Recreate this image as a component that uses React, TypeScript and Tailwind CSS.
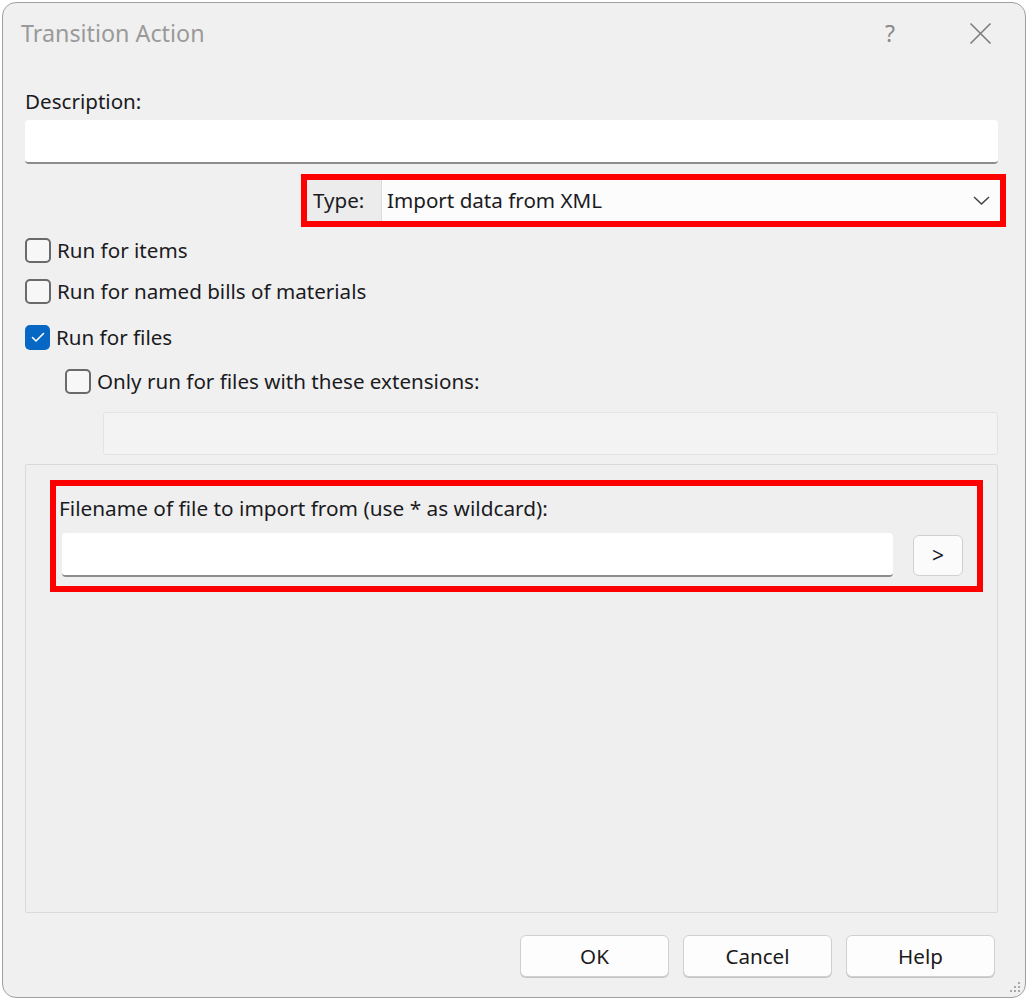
import React from "react";

const font = { fontFamily: '"Noto Sans", "Open Sans", sans-serif' };

function Check({ checked, label, indent }: { checked?: boolean; label: string; indent?: boolean }) {
  return (
    <div className={`flex h-[26px] items-center ${indent ? "pl-[40px]" : ""}`}>
      {checked ? (
        <span className="flex h-[25px] w-[25px] items-center justify-center rounded-[5px] bg-[#0767c4]">
          <svg width="14" height="11" viewBox="0 0 14 11" fill="none">
            <path d="M1.5 5.5 L5 9 L12.5 1.5" stroke="white" strokeWidth="1.6" strokeLinecap="round" strokeLinejoin="round" />
          </svg>
        </span>
      ) : (
        <span className="h-[25px] w-[26px] rounded-[5px] border-2 border-[#6a6a6a] bg-[#f7f7f7]" />
      )}
      <span className="ml-[6px] text-[20.6px] leading-[26px] text-[#1b1b1f]">{label}</span>
    </div>
  );
}

function Btn({ children }: { children: React.ReactNode }) {
  return (
    <button className="h-[42px] w-[149px] rounded-[6px] border border-[#d0d0d0] bg-[#fdfdfd] text-[20.6px] text-[#1b1b1b] shadow-[0_1px_0_#c4c4c4]">
      {children}
    </button>
  );
}

export default function App() {
  return (
    <div className="h-[1000px] w-[1029px] bg-white pl-[2px] pt-[2px]" style={font}>
      <div className="relative flex h-[996px] w-[1024px] flex-col rounded-[14px] border border-[#a0a0a0] bg-[#f0f0f0]">
        {/* title bar */}
        <div className="flex h-[61px] items-center pl-[18px] pr-[33px]">
          <span className="text-[23.3px] text-[#9a9a9a]">Transition Action</span>
          <span className="ml-auto text-[23px] text-[#8a8a8a]">?</span>
          <svg className="ml-[74px]" width="23" height="23" viewBox="0 0 23 23" fill="none">
            <path d="M1.5 1.5 L21.5 21.5 M21.5 1.5 L1.5 21.5" stroke="#7c7c7c" strokeWidth="1.6" />
          </svg>
        </div>

        <div className="flex flex-1 flex-col pl-[22px] pr-[27px]">
          <div className="mt-[24px] h-[26px] text-[20.6px] leading-[26px] text-[#1b1b1f]">Description:</div>
          <div className="mt-[6px] h-[44px] rounded-[4px] border-b-2 border-[#8c8c8c] bg-white" />

          {/* type */}
          <div className="mt-[10px] flex justify-end">
            <div className="-mr-[8px] flex h-[53px] w-[705px] border-[6px] border-[#ff0000]">
              <div className="flex w-[74px] items-center bg-[#ececec] pl-[6px] text-[20.6px] text-[#1b1b1f]">Type:</div>
              <div className="flex flex-1 items-center border-l border-[#dcdcdc] bg-[#fcfcfc] pl-[5px] pr-[10px] text-[20.6px] text-[#1b1b1f]">
                Import data from XML
                <svg className="ml-auto" width="17" height="9" viewBox="0 0 17 9" fill="none">
                  <path d="M1 1 L8.5 8 L16 1" stroke="#444" strokeWidth="1.5" />
                </svg>
              </div>
            </div>
          </div>

          <div className="mt-[10px]">
            <Check label="Run for items" />
          </div>
          <div className="mt-[15px]">
            <Check label="Run for named bills of materials" />
          </div>
          <div className="mt-[20px]">
            <Check checked label="Run for files" />
          </div>
          <div className="mt-[18px]">
            <Check indent label="Only run for files with these extensions:" />
          </div>
          <div className="ml-[78px] mt-[18px] h-[43px] rounded-[3px] border border-[#e3e3e3] bg-[#f3f3f3]" />

          {/* group panel */}
          <div className="mt-[9px] flex-1 rounded-[2px] border border-[#dadada] bg-[#efefef] pl-[24px] pt-[15px]">
            <div className="flex h-[112px] w-[933px] flex-col border-[6px] border-[#ff0000] pl-[6px]">
              <div className="ml-[-3px] mt-[9px] h-[26px] text-[20.8px] leading-[26px] text-[#1b1b1f]">
                Filename of file to import from (use * as wildcard):
              </div>
              <div className="mt-[12px] flex items-start">
                <div className="h-[44px] w-[831px] rounded-[4px] border-b-2 border-[#8c8c8c] bg-white" />
                <button className="ml-[20px] mt-[2px] flex h-[41px] w-[50px] items-center justify-center rounded-[6px] border border-[#d0d0d0] bg-[#fbfbfb] text-[21px] text-[#1b1b2f]">
                  &gt;
                </button>
              </div>
            </div>
          </div>

          <div className="mb-[20px] mr-[3px] mt-[22px] flex justify-end gap-[14px]">
            <Btn>OK</Btn>
            <Btn>Cancel</Btn>
            <Btn>Help</Btn>
          </div>
        </div>

        {/* resize grip */}
        <svg className="absolute bottom-[3px] right-[4px]" width="14" height="14" viewBox="0 0 14 14">
          {[
            [11, 2],
            [7, 6],
            [11, 6],
            [3, 10],
            [7, 10],
            [11, 10],
          ].map(([x, y], i) => (
            <rect key={i} x={x} y={y} width="2" height="2" fill="#a8a8a8" />
          ))}
        </svg>
      </div>
    </div>
  );
}
